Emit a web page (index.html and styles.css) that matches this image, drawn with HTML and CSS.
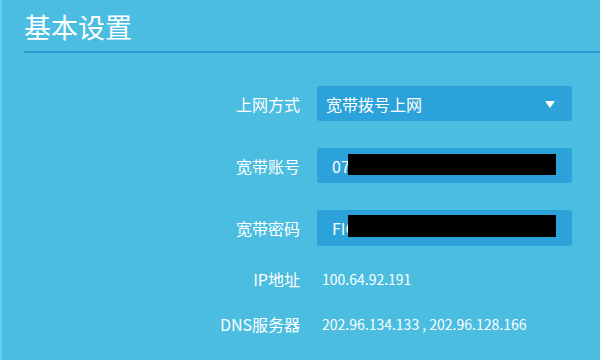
FILE: index.html
```html
<!DOCTYPE html>
<html lang="zh-CN">
<head>
<meta charset="utf-8">
<title>基本设置</title>
<link rel="stylesheet" href="styles.css">
</head>
<body>
<div class="page">
  <header class="header">
    <h1 class="title">基本设置</h1>
  </header>
  <div class="form">
    <div class="row field-row">
      <div class="label">上网方式</div>
      <div class="field select">
        <span class="select-text">宽带拨号上网</span>
        <span class="arrow"></span>
      </div>
    </div>
    <div class="row field-row">
      <div class="label">宽带账号</div>
      <div class="field input">
        <span class="input-text">07</span>
        <span class="redact"></span>
      </div>
    </div>
    <div class="row field-row">
      <div class="label">宽带密码</div>
      <div class="field input">
        <span class="input-text">FIC</span>
        <span class="redact redact-2"></span>
      </div>
    </div>
    <div class="row info-row first-info">
      <div class="label">IP地址</div>
      <div class="value">100.64.92.191</div>
    </div>
    <div class="row info-row">
      <div class="label">DNS服务器</div>
      <div class="value">202.96.134.133 , 202.96.128.166</div>
    </div>
  </div>
</div>
</body>
</html>
```

FILE: styles.css
```css
html, body {
  margin: 0;
  padding: 0;
}
body {
  width: 600px;
  height: 360px;
  overflow: hidden;
  background: #4bbde1;
  font-family: "Noto Sans CJK SC", "Noto Sans", sans-serif;
  color: #ffffff;
}
.page {
  height: 360px;
  border-left: 2px solid #5fd1e8;
  box-sizing: border-box;
}
.header {
  padding: 12px 0 0 22px;
}
.title {
  margin: 0;
  font-size: 27px;
  font-weight: normal;
  line-height: 30px;
  padding-bottom: 9px;
  border-bottom: 2px solid #2a9dd2;
  letter-spacing: 0;
}
.form {
  margin-top: 33px;
  display: flex;
  flex-direction: column;
}
.row {
  display: flex;
  align-items: center;
  gap: 17px;
}
.field-row {
  height: 35px;
  margin-bottom: 27px;
}
.field-row:nth-child(3) {
  margin-bottom: 10px;
  height: 36px;
}
.info-row {
  height: 45px;
  gap: 22px;
}
.label {
  width: 298px;
  text-align: right;
  font-size: 16px;
  line-height: 20px;
}
.field {
  position: relative;
  width: 255px;
  height: 100%;
  background: #2ba2d9;
  border-radius: 3px;
  display: flex;
  align-items: center;
  box-sizing: border-box;
}
.select {
  padding-left: 9px;
}
.select-text {
  font-size: 16px;
}
.arrow {
  position: absolute;
  right: 17px;
  top: 15px;
  width: 0;
  height: 0;
  border-left: 5.5px solid transparent;
  border-right: 5.5px solid transparent;
  border-top: 7px solid #ffffff;
}
.input {
  padding-left: 15px;
}
.input-text {
  font-size: 16px;
}
.redact {
  position: absolute;
  left: 31px;
  top: 6px;
  width: 208px;
  height: 21px;
  background: #000000;
}
.redact-2 {
  top: 5px;
  height: 22px;
}
.value {
  font-size: 14px;
  line-height: 20px;
}
```
